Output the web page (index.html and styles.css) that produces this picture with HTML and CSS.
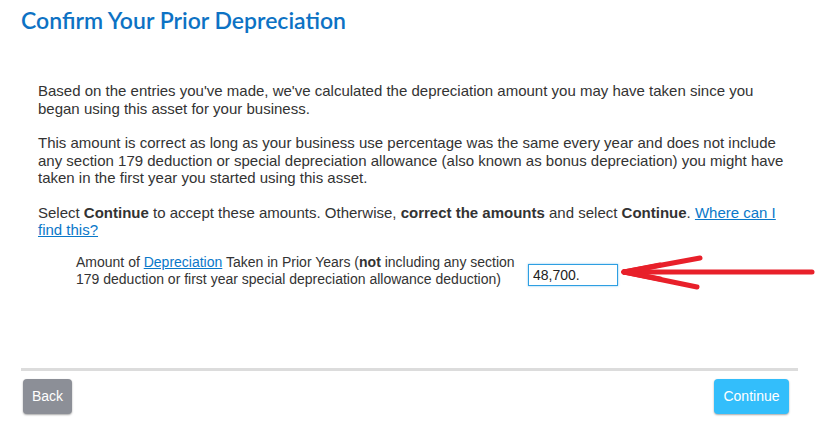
FILE: index.html
```html
<!DOCTYPE html>
<html lang="en">
<head>
<meta charset="utf-8">
<title>Confirm Your Prior Depreciation</title>
<link rel="stylesheet" href="styles.css">
</head>
<body>
<div class="page">
  <h1 class="title">Confirm Your Prior Depreciation</h1>
  <div class="content">
    <p class="para">Based on the entries you've made, we've calculated the depreciation amount you may have taken since you<br>began using this asset for your business.</p>
    <p class="para">This amount is correct as long as your business use percentage was the same every year and does not include<br>any section 179 deduction or special depreciation allowance (also known as bonus depreciation) you might have<br>taken in the first year you started using this asset.</p>
    <p class="para para-last">Select <b>Continue</b> to accept these amounts. Otherwise, <b>correct the amounts</b> and select <b>Continue</b>. <a class="link" href="#">Where can I<br>find this?</a></p>
    <div class="field">
      <label class="field-label" for="amt">Amount of <a class="link" href="#">Depreciation</a> Taken in Prior Years (<b>not</b> including any section 179 deduction or first year special depreciation allowance deduction)</label>
      <input class="field-input" id="amt" type="text" value="48,700.">
    </div>
  </div>
  <div class="footer">
    <button class="btn btn-back" type="button">Back</button>
    <button class="btn btn-continue" type="button">Continue</button>
  </div>
  <svg class="arrow" width="200" height="45" viewBox="0 0 200 45" aria-hidden="true">
    <g stroke="#e8202a" stroke-width="5" stroke-linecap="round" fill="none">
      <line x1="4" y1="22" x2="192" y2="22"/>
      <line x1="4" y1="22" x2="80" y2="8"/>
      <line x1="4" y1="22" x2="77" y2="37"/>
      <line x1="4" y1="22" x2="40" y2="15"/>
      <line x1="4" y1="22" x2="40" y2="29"/>
    </g>
  </svg>
</div>
</body>
</html>
```
FILE: styles.css
```css
html, body {
  margin: 0;
  padding: 0;
  background: #ffffff;
}

.page {
  position: relative;
  width: 831px;
  height: 448px;
  padding: 0 0 0 21px;
  box-sizing: border-box;
  font-family: "Liberation Sans", Arial, sans-serif;
  font-size: 14px;
  color: #333333;
}

.title {
  margin: 0;
  padding-top: 6px;
  font-family: Lato, "Open Sans", sans-serif;
  font-size: 23px;
  line-height: 28px;
  font-weight: 600;
  color: #0d72c4;
}

.content {
  display: flex;
  flex-direction: column;
  margin: 48px 0 0 17px;
  width: 790px;
}

.para {
  margin: 0 0 17px 0;
  font-size: 15px;
  line-height: 17.5px;
}

.para-last {
  margin-bottom: 15px;
}

.link {
  color: #0a78c9;
  text-decoration: underline;
}

.field {
  display: flex;
  align-items: flex-end;
  gap: 7px;
  margin-left: 38px;
}

.field-label {
  width: 445px;
  line-height: 17px;
}

.field-input {
  width: 90px;
  height: 22px;
  box-sizing: border-box;
  border: 1px solid #2e9fe2;
  box-shadow: 0 0 2px rgba(46, 159, 226, 0.6);
  padding: 0 4px;
  font-family: "Liberation Sans", Arial, sans-serif;
  font-size: 14px;
  color: #222222;
  margin-bottom: 2px;
  outline: none;
}

.footer {
  width: 777px;
  margin-top: 80px;
  padding: 8px 9px 0 2px;
  box-sizing: border-box;
  border-top: 3px solid #dcdcdc;
  display: flex;
  justify-content: space-between;
}

.btn {
  height: 35px;
  border: none;
  border-radius: 4px;
  color: #ffffff;
  font-family: "Liberation Sans", Arial, sans-serif;
  font-size: 14px;
  box-shadow: 0 1px 2px rgba(0, 0, 0, 0.35);
  padding: 0;
}

.btn-back {
  width: 49px;
  background: #8c8f97;
}

.btn-continue {
  width: 75px;
  background: #33befb;
}

.arrow {
  position: absolute;
  left: 620px;
  top: 250px;
}
```
